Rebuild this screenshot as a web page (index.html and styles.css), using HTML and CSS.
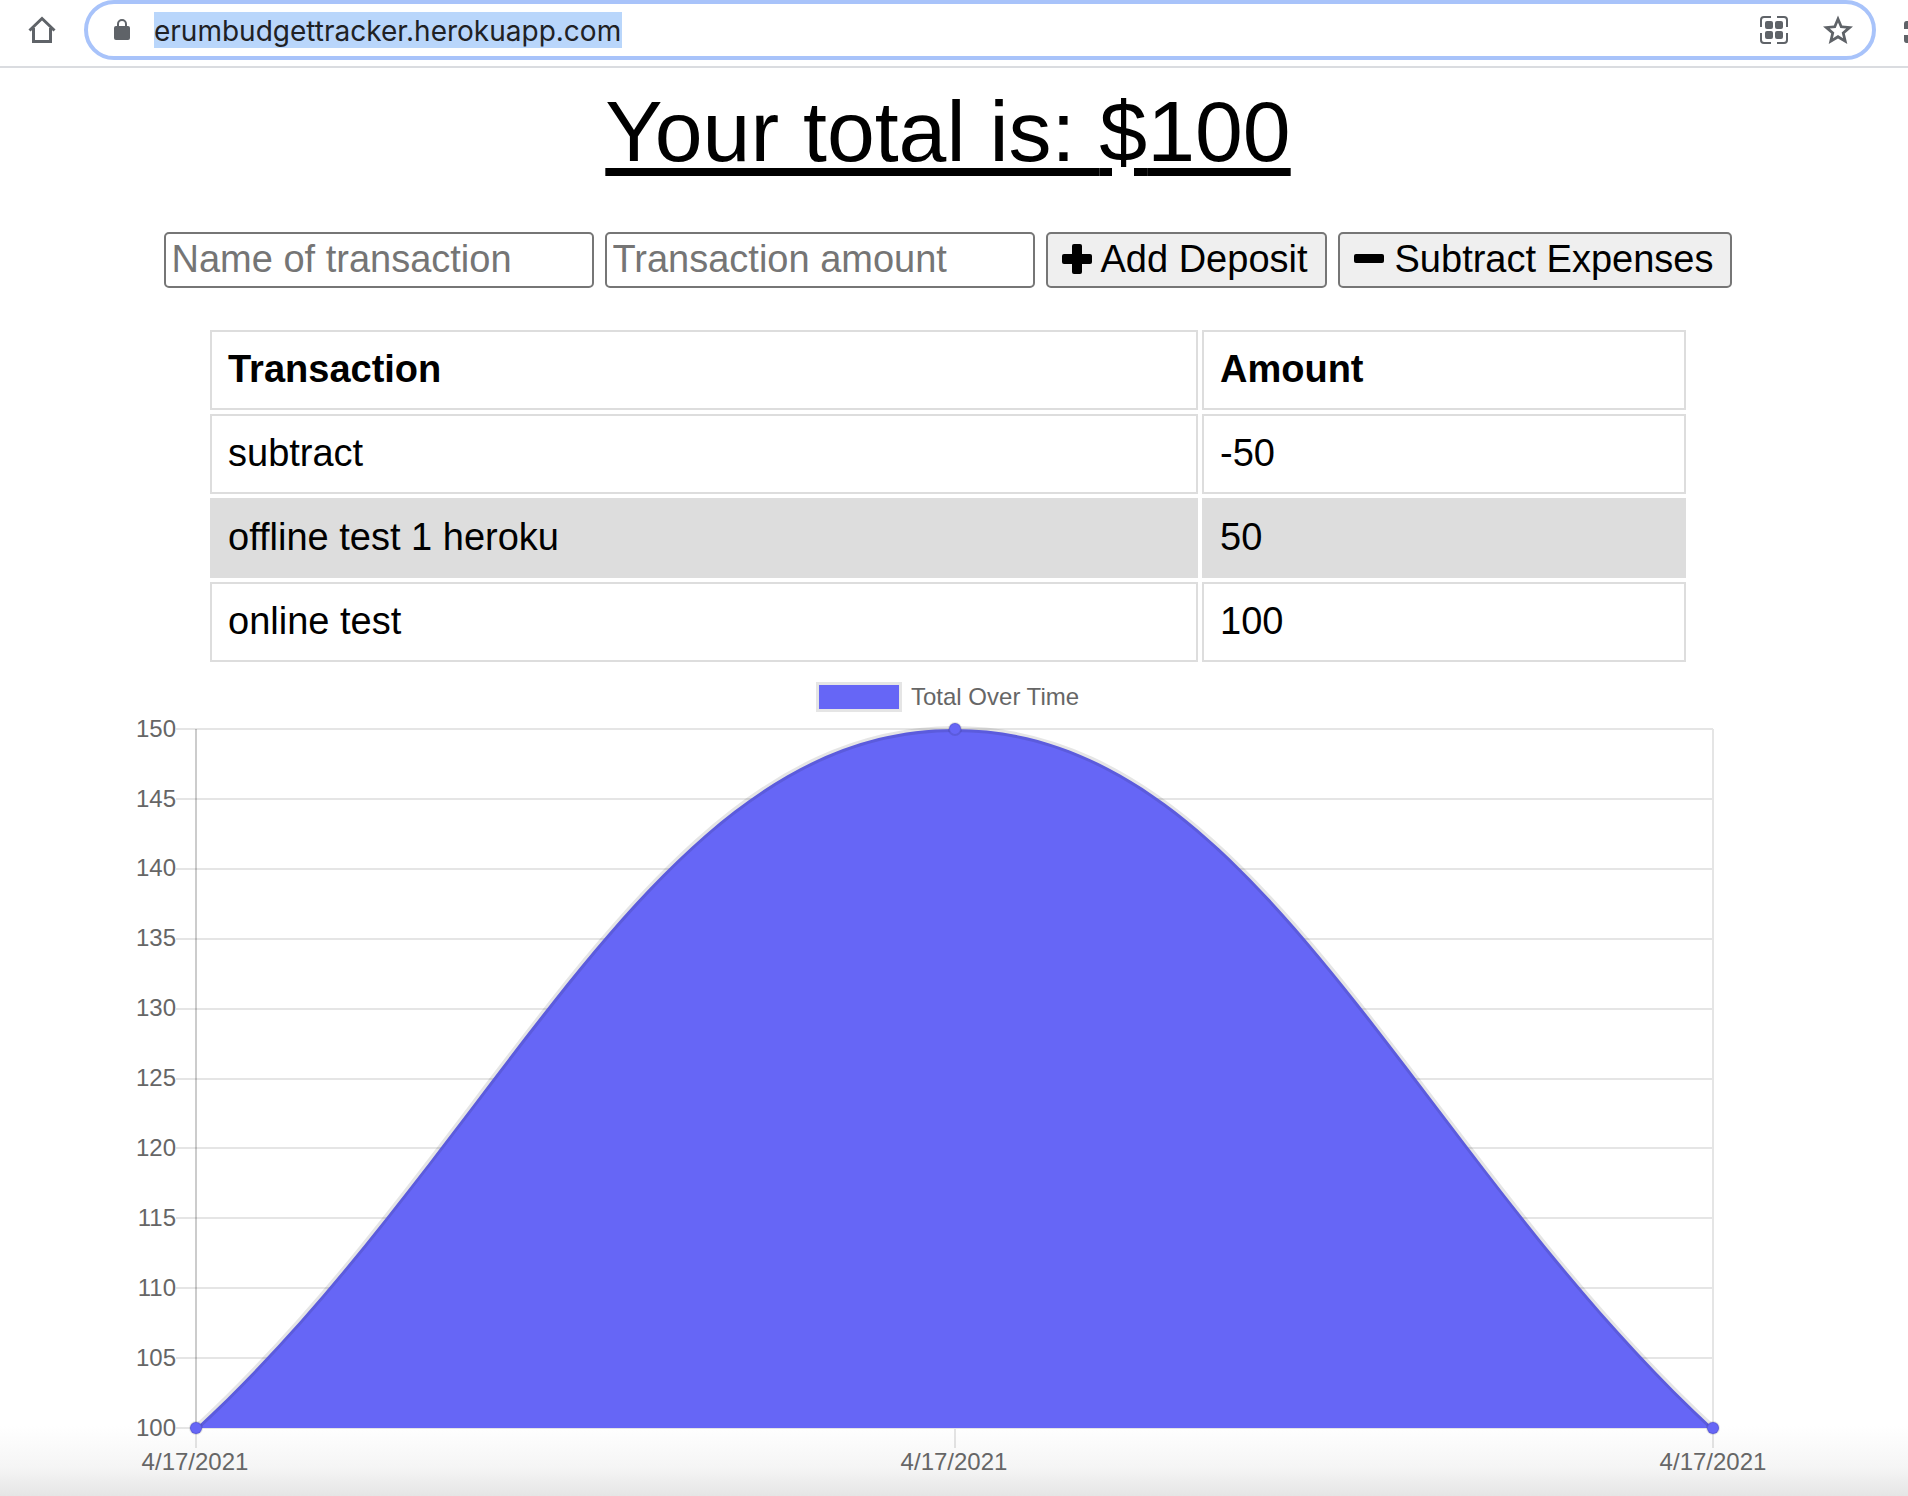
FILE: index.html
```html
<!DOCTYPE html>
<html lang="en">
<head>
<meta charset="utf-8">
<meta name="viewport" content="width=device-width, initial-scale=1">
<title>Budget Tracker</title>
<link rel="stylesheet" href="styles.css">
</head>
<body>
<header class="toolbar">
  <button class="icon-button" type="button" aria-label="Home">
    <svg width="28" height="28" viewBox="0 0 28 28" fill="none" stroke="#5f6368" stroke-width="3"><path d="M1.500 14.500 14 2.500 26.500 14.500M5.500 12V25.500H22.500V12"/></svg>
  </button>
  <div class="omnibox">
    <svg class="lock" width="18" height="22" viewBox="0 0 18 22"><rect x="1" y="7" width="16" height="14" rx="2" fill="#5f6368"/><path d="M5 8V5a4 4 0 0 1 8 0v3" fill="none" stroke="#5f6368" stroke-width="2"/></svg>
    <input class="address" type="text" aria-label="Address" value="erumbudgettracker.herokuapp.com">
    <button class="icon-button" type="button" aria-label="Create QR code">
      <svg width="30" height="30" viewBox="0 0 30 30"><g fill="none" stroke="#5f6368" stroke-width="2"><path d="M2 12V5a3 3 0 0 1 3-3h7M18 2h7a3 3 0 0 1 3 3v7M28 18v7a3 3 0 0 1-3 3h-7M12 28H5a3 3 0 0 1-3-3v-7"/></g><g fill="#5f6368"><rect x="6" y="6" width="8" height="8" rx="2"/><rect x="16" y="6" width="8" height="8" rx="2"/><rect x="6" y="16" width="8" height="8" rx="2"/><rect x="16" y="16" width="8" height="8" rx="2"/></g></svg>
    </button>
    <button class="icon-button" type="button" aria-label="Bookmark this page">
      <svg width="30" height="30" viewBox="0 0 30 30" fill="#5f6368"><path fill-rule="evenodd" d="M30 11.400 19.200 10.500 15 .600 10.800 10.500 0 11.400 8.200 18.500 5.700 29 15 23.400 24.300 29 21.800 18.500ZM15 20.100 9.900 23.200 11.300 17.400 6.800 13.500 12.700 13 15 7.500 17.300 13 23.200 13.500 18.700 17.400 20.100 23.200Z"/></svg>
    </button>
  </div>
  <svg class="extension" width="4" height="24" viewBox="0 0 4 24" fill="#5f6368"><path d="M4 1H2.500Q0 1 0 4V9H4ZM4 15H0V20Q0 23 2.500 23H4Z"/></svg>
</header>

<main class="page">
  <h1 class="total">Your total is: <span class="currency">$</span><span id="total">100</span></h1>

  <form class="entry">
    <input class="field" type="text" aria-label="Name of transaction" placeholder="Name of transaction">
    <input class="field" type="text" aria-label="Transaction amount" placeholder="Transaction amount">
    <button class="action" type="button">
      <svg width="30" height="30" viewBox="0 0 30 30"><rect y="10" width="30" height="10" rx="2"/><rect x="10" width="10" height="30" rx="2"/></svg>
      Add Deposit
    </button>
    <button class="action" type="button">
      <svg width="32" height="30" viewBox="0 0 32 30"><rect y="10" width="30" height="9" rx="2"/></svg>
      Subtract Expenses
    </button>
  </form>

  <table class="ledger">
    <thead>
      <tr><th class="name" scope="col">Transaction</th><th scope="col">Amount</th></tr>
    </thead>
    <tbody>
      <tr><td>subtract</td><td>-50</td></tr>
      <tr><td>offline test 1 heroku</td><td>50</td></tr>
      <tr><td>online test</td><td>100</td></tr>
    </tbody>
  </table>

  <svg class="chart" viewBox="0 0 1896 820" role="img" aria-label="Total Over Time">
    <rect x="816" y="13" width="86" height="30" fill="#e5e5e5"/>
    <rect x="819" y="16" width="80" height="24" fill="#6666f6"/>
    <text x="911" y="36">Total Over Time</text>

    <path class="grid" d="M176 60H1713M176 130H1713M176 200H1713M176 270H1713M176 340H1713M176 410H1713M176 479H1713M176 549H1713M176 619H1713M176 689H1713M176 759H1713M955 60V779M1713 60V779M196 759V779"/>
    <path class="axis" d="M196 60V759"/>

    <path d="M196 759C499 479 651 60 954.500 60S1410 479 1713 759Z" fill="#6666f6"/>
    <path class="curve" d="M196 759C499 479 651 60 954.500 60S1410 479 1713 759"/>
    <g class="points"><circle cx="196" cy="759" r="6"/><circle cx="955" cy="60" r="6"/><circle cx="1713" cy="759" r="6"/></g>

    <g text-anchor="end">
      <text x="176" y="68">150</text>
      <text x="176" y="138">145</text>
      <text x="176" y="207">140</text>
      <text x="176" y="277">135</text>
      <text x="176" y="347">130</text>
      <text x="176" y="417">125</text>
      <text x="176" y="487">120</text>
      <text x="176" y="557">115</text>
      <text x="176" y="627">110</text>
      <text x="176" y="697">105</text>
      <text x="176" y="767">100</text>
    </g>
    <g text-anchor="middle">
      <text x="195" y="801">4/17/2021</text>
      <text x="954" y="801">4/17/2021</text>
      <text x="1713" y="801">4/17/2021</text>
    </g>
  </svg>
</main>
</body>
</html>
```
FILE: styles.css
```css
* {
  box-sizing: border-box;
}

body {
  margin: 0;
  min-height: 100vh;
  background: linear-gradient(to top, #e5e5e5, #f5f5f5 28px, #ffffff 70px);
  color: #000000;
  font-family: "Liberation Sans", Arial, sans-serif;
  font-size: 38px;
  line-height: 44px;
}

svg {
  display: block;
  flex: none;
}

/* Browser toolbar */

.toolbar {
  display: flex;
  align-items: flex-start;
  gap: 28px;
  height: 68px;
  padding-left: 28px;
  border-bottom: 2px solid #dadce0;
  background: #ffffff;
}

.icon-button {
  display: flex;
  align-items: center;
  height: 60px;
  padding: 0;
  border: 0;
  background: none;
}

.omnibox {
  display: flex;
  flex: 1;
  align-items: center;
  gap: 34px;
  height: 60px;
  padding: 0 19px 0 25px;
  border: 4px solid #a8c3fa;
  border-radius: 30px;
}

.lock {
  margin-right: -11px;
}

.address {
  width: 468px;
  height: 36px;
  margin-right: auto;
  padding: 1px 0 0;
  border: 0;
  outline: 0;
  background: #b9d6fb;
  color: #202124;
  font-family: Inter, Roboto, sans-serif;
  font-size: 28px;
}

.extension {
  align-self: center;
  margin-bottom: 2px;
}

/* Tracker page */

.page {
  padding: 13px 12px 0 0;
}

.total {
  margin: 0 0 51px;
  font-size: 86px;
  font-weight: 400;
  line-height: 100px;
  text-align: center;
  text-decoration: underline;
  text-decoration-thickness: 8px;
  text-underline-offset: 7px;
}

/* Breaks the underline around the foot of the dollar sign */
.currency {
  position: relative;
}

.currency::after {
  content: "";
  position: absolute;
  bottom: 2px;
  left: 13px;
  width: 22px;
  height: 10px;
  background: #ffffff;
}

.entry {
  display: flex;
  justify-content: center;
  gap: 11px;
  margin-bottom: 38px;
}

.field,
.action {
  height: 56px;
  border: 2px solid #767676;
  border-radius: 5px;
  font: inherit;
}

.field {
  width: 430px;
  padding: 0 6px 2px;
  background: #ffffff;
}

.field::placeholder {
  color: #757575;
}

.action {
  display: flex;
  align-items: center;
  gap: 9px;
  padding: 0 17px 2px 14px;
  background: #efefef;
  color: #000000;
}

.ledger {
  width: 1484px;
  max-width: 100%;
  margin: 0 auto 3px;
  border-spacing: 4px;
  table-layout: fixed;
}

.ledger .name {
  width: 988px;
}

.ledger th,
.ledger td {
  padding: 15px 16px 17px;
  border: 2px solid #dddddd;
  text-align: left;
}

.ledger tbody tr:nth-child(even) {
  background: #dddddd;
}

/* Chart */

.chart {
  width: 100%;
  height: auto;
  fill: #666666;
  font-size: 24px;
}

.grid,
.axis,
.curve {
  fill: none;
  stroke: #000000;
}

.grid {
  stroke-width: 2px;
  stroke-opacity: 0.1;
}

.axis {
  stroke-width: 2px;
  stroke-opacity: 0.2;
}

.curve {
  stroke-width: 6px;
  stroke-opacity: 0.1;
}

.points {
  fill: #6666f6;
  stroke: #000000;
  stroke-width: 2px;
  stroke-opacity: 0.1;
}
```
